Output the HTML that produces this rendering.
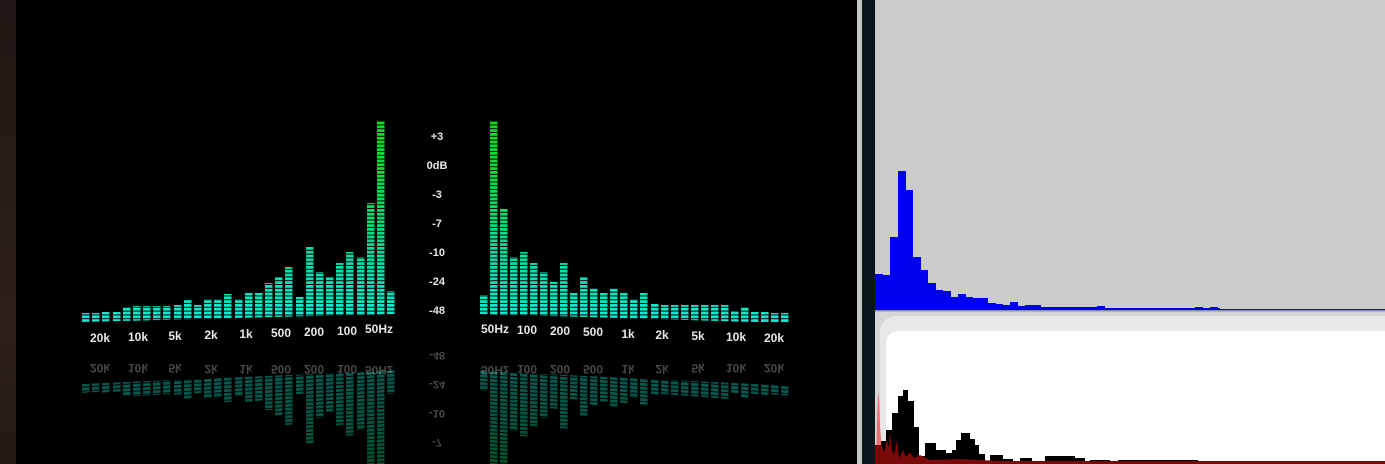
<!DOCTYPE html>
<html><head><meta charset="utf-8"><style>
html,body{margin:0;padding:0;background:#000;width:1385px;height:464px;overflow:hidden}
svg{display:block}
text{font-family:"Liberation Sans",sans-serif;font-weight:bold}
</style></head><body>
<svg width="1385" height="464" viewBox="0 0 1385 464" xmlns="http://www.w3.org/2000/svg">
<defs>
<linearGradient id="lg" gradientUnits="userSpaceOnUse" x1="0" y1="325" x2="0" y2="120">
<stop offset="0" stop-color="#12ecd8"/><stop offset="0.3" stop-color="#00e0a8"/><stop offset="0.6" stop-color="#00e060"/><stop offset="1" stop-color="#10e010"/>
</linearGradient>
<linearGradient id="brown" x1="0" y1="0" x2="0" y2="1"><stop offset="0" stop-color="#1f1814"/><stop offset="0.7" stop-color="#2e2019"/><stop offset="1" stop-color="#231a15"/></linearGradient>
<pattern id="stripe" patternUnits="userSpaceOnUse" width="10" height="3.8"><rect x="0" y="0" width="10" height="2.8" fill="#fff"/></pattern>
<mask id="segm" maskUnits="userSpaceOnUse" x="0" y="0" width="1385" height="464"><rect x="0" y="0" width="1385" height="464" fill="url(#stripe)"/></mask>
<clipPath id="clipL"><polygon points="70,0 400,0 400,313.8 70,322.3"/></clipPath>
<clipPath id="clipR"><polygon points="470,0 800,0 800,323.3 470,313.7"/></clipPath>
<g id="L">
<g clip-path="url(#clipL)" mask="url(#segm)" fill="url(#lg)">
<rect x="82" y="313" width="7.5" height="20"/><rect x="92" y="313" width="7.5" height="20"/><rect x="102" y="312" width="7.5" height="20"/><rect x="113" y="312" width="7.5" height="20"/><rect x="123" y="307" width="7.5" height="25"/><rect x="133" y="306" width="7.5" height="26"/><rect x="143" y="306" width="7.5" height="26"/><rect x="153" y="306" width="7.5" height="26"/><rect x="163" y="306" width="7.5" height="26"/><rect x="174" y="305" width="7.5" height="26"/><rect x="184" y="300" width="7.5" height="30"/><rect x="194" y="305" width="7.5" height="26"/><rect x="204" y="299" width="7.5" height="30"/><rect x="214" y="299" width="7.5" height="30"/><rect x="224" y="294" width="7.5" height="35"/><rect x="235" y="299" width="7.5" height="30"/><rect x="245" y="293" width="7.5" height="35"/><rect x="255" y="293" width="7.5" height="35"/><rect x="265" y="283" width="7.5" height="45"/><rect x="275" y="277" width="7.5" height="50"/><rect x="285" y="267" width="7.5" height="60"/><rect x="296" y="297" width="7.5" height="30"/><rect x="306" y="247" width="7.5" height="80"/><rect x="316" y="272" width="7.5" height="55"/><rect x="326" y="277" width="7.5" height="50"/><rect x="336" y="263" width="7.5" height="60"/><rect x="346" y="252" width="7.5" height="70"/><rect x="357" y="257" width="7.5" height="70"/><rect x="367" y="203" width="7.5" height="120"/><rect x="377" y="121" width="7.5" height="200"/><rect x="387" y="291" width="7.5" height="30"/>
</g></g>
<g id="R">
<g clip-path="url(#clipR)" mask="url(#segm)" fill="url(#lg)">
<rect x="480" y="295" width="7.5" height="35"/><rect x="490" y="121" width="7.5" height="210"/><rect x="500" y="208" width="7.5" height="120"/><rect x="510" y="257" width="7.5" height="70"/><rect x="520" y="252" width="7.5" height="75"/><rect x="530" y="263" width="7.5" height="65"/><rect x="540" y="272" width="7.5" height="55"/><rect x="550" y="282" width="7.5" height="45"/><rect x="560" y="263" width="7.5" height="65"/><rect x="570" y="293" width="7.5" height="35"/><rect x="580" y="277" width="7.5" height="50"/><rect x="590" y="288" width="7.5" height="40"/><rect x="600" y="293" width="7.5" height="35"/><rect x="610" y="288" width="7.5" height="40"/><rect x="620" y="293" width="7.5" height="35"/><rect x="630" y="299" width="7.5" height="30"/><rect x="640" y="293" width="7.5" height="35"/><rect x="651" y="304" width="7.5" height="25"/><rect x="661" y="305" width="7.5" height="25"/><rect x="671" y="305" width="7.5" height="25"/><rect x="681" y="305" width="7.5" height="25"/><rect x="691" y="305" width="7.5" height="25"/><rect x="701" y="305" width="7.5" height="25"/><rect x="711" y="305" width="7.5" height="25"/><rect x="721" y="305" width="7.5" height="25"/><rect x="731" y="311" width="7.5" height="20"/><rect x="741" y="307" width="7.5" height="25"/><rect x="751" y="312" width="7.5" height="20"/><rect x="761" y="312" width="7.5" height="20"/><rect x="771" y="313" width="7.5" height="20"/><rect x="781" y="313" width="7.5" height="20"/>
</g></g>
</defs>

<rect x="0" y="0" width="1385" height="464" fill="#000"/>
<rect x="0" y="0" width="16" height="464" fill="url(#brown)"/>

<use href="#L"/>
<use href="#R"/>
<g opacity="0.38">
<use href="#L" transform="matrix(1,-0.0689,0,-1,0,711.6)"/>
<use href="#R" transform="matrix(1,0.0764,0,-1,0,648.3)"/>
</g>

<g fill="#e6e6e6" font-size="12" text-anchor="middle">
<text x="100" y="342">20k</text><text x="138" y="341">10k</text><text x="175" y="340">5k</text><text x="211" y="339">2k</text><text x="246" y="338">1k</text><text x="281" y="337">500</text><text x="314" y="336">200</text><text x="347" y="335">100</text><text x="379" y="333">50Hz</text>
<text x="495" y="333">50Hz</text><text x="527" y="334">100</text><text x="560" y="335">200</text><text x="593" y="336">500</text><text x="628" y="338">1k</text><text x="662" y="339">2k</text><text x="698" y="340">5k</text><text x="736" y="341">10k</text><text x="774" y="342">20k</text>
</g>
<g fill="#e6e6e6" font-size="12" text-anchor="middle" opacity="0.3" transform="translate(0,697) scale(1,-1)">
<text x="100" y="333">20k</text><text x="138" y="333">10k</text><text x="175" y="333">5k</text><text x="211" y="332">2k</text><text x="246" y="332">1k</text><text x="281" y="332">500</text><text x="314" y="332">200</text><text x="347" y="332">100</text><text x="379" y="331">50Hz</text>
<text x="495" y="331">50Hz</text><text x="527" y="332">100</text><text x="560" y="332">200</text><text x="593" y="332">500</text><text x="628" y="332">1k</text><text x="662" y="332">2k</text><text x="698" y="333">5k</text><text x="736" y="333">10k</text><text x="774" y="333">20k</text>
</g>
<g fill="#e6e6e6" font-size="11" text-anchor="middle">
<text x="437" y="140">+3</text><text x="437" y="169">0dB</text><text x="437" y="198">-3</text><text x="437" y="227">-7</text><text x="437" y="256">-10</text><text x="437" y="285">-24</text><text x="437" y="314">-48</text>
</g>
<g fill="#e6e6e6" font-size="11" text-anchor="middle" opacity="0.3" transform="translate(0,666) scale(1,-1)">
<text x="437" y="314">-48</text><text x="437" y="285">-24</text><text x="437" y="256">-10</text><text x="437" y="227">-7</text>
</g>

<rect x="857" y="0" width="5" height="464" fill="#c4c4c4"/>
<rect x="862" y="0" width="13" height="464" fill="#08161a"/>
<rect x="875" y="0" width="510" height="464" fill="#cbcbcb"/>
<rect x="875" y="311" width="510" height="153" fill="#d6d6d6"/>
<rect x="880" y="316" width="520" height="160" rx="16" fill="#e8e8e8"/>
<rect x="886" y="331" width="510" height="150" rx="12" fill="#fefefe"/>
<rect x="875" y="310" width="510" height="1.5" fill="#8a8ab8"/>
<g fill="#0000f0">
<rect x="875" y="274" width="8" height="36"/><rect x="883" y="275" width="8" height="35"/><rect x="890" y="237" width="8" height="73"/><rect x="898" y="171" width="8" height="139"/><rect x="905" y="190" width="8" height="120"/><rect x="913" y="257" width="8" height="53"/><rect x="920" y="270" width="8" height="40"/><rect x="928" y="283" width="8" height="27"/><rect x="935" y="290" width="8" height="20"/><rect x="943" y="291" width="8" height="19"/><rect x="950" y="297" width="8" height="13"/><rect x="958" y="294" width="8" height="16"/><rect x="965" y="297" width="8" height="13"/><rect x="973" y="298" width="8" height="12"/><rect x="980" y="298" width="8" height="12"/><rect x="988" y="303" width="8" height="7"/><rect x="995" y="304" width="8" height="6"/><rect x="1003" y="305" width="8" height="5"/><rect x="1010" y="302" width="8" height="8"/><rect x="1018" y="306" width="8" height="4"/><rect x="1025" y="305" width="8" height="5"/><rect x="1033" y="305" width="8" height="5"/><rect x="1040" y="307" width="60" height="3"/><rect x="1097" y="306" width="8" height="4"/><rect x="1100" y="308" width="120" height="2"/><rect x="1195" y="307" width="8" height="3"/><rect x="1210" y="307" width="8" height="3"/><rect x="1220" y="309" width="165" height="1"/>
</g>
<g fill="#000">
<rect x="880" y="441" width="6" height="22"/><rect x="886" y="430" width="6" height="33"/><rect x="892" y="413" width="6" height="50"/><rect x="898" y="396" width="5" height="67"/><rect x="903" y="390" width="5" height="73"/><rect x="908" y="401" width="6" height="62"/><rect x="914" y="427" width="5" height="36"/><rect x="919" y="456" width="6" height="7"/><rect x="925" y="443" width="11" height="20"/><rect x="936" y="450" width="10" height="13"/><rect x="946" y="453" width="6" height="10"/><rect x="952" y="450" width="4" height="13"/><rect x="956" y="440" width="5" height="23"/><rect x="961" y="433" width="9" height="30"/><rect x="970" y="439" width="5" height="24"/><rect x="975" y="445" width="4" height="18"/><rect x="979" y="454" width="6" height="9"/><rect x="990" y="455" width="13" height="8"/><rect x="1003" y="459" width="10" height="4"/><rect x="1020" y="458" width="12" height="5"/><rect x="1045" y="456" width="30" height="7"/><rect x="1075" y="458" width="10" height="5"/><rect x="1090" y="460" width="20" height="3"/><rect x="1118" y="460" width="80" height="3"/><rect x="1200" y="461" width="185" height="2"/>
</g>
<polygon points="876,463 877,420 878,392 879,398 880,425 882,455 884,463" fill="#e87070"/>
<g fill="#7a0a0a">
<polygon points="875,463 875,445 881,445 884,452 887,440 889,448 890,432 892,450 894,455 897,440 899,458 903,450 906,457 910,452 914,458 920,455 930,460 960,459 1000,461 1385,461 1385,464 875,464"/>
</g>
</svg>
</body></html>
